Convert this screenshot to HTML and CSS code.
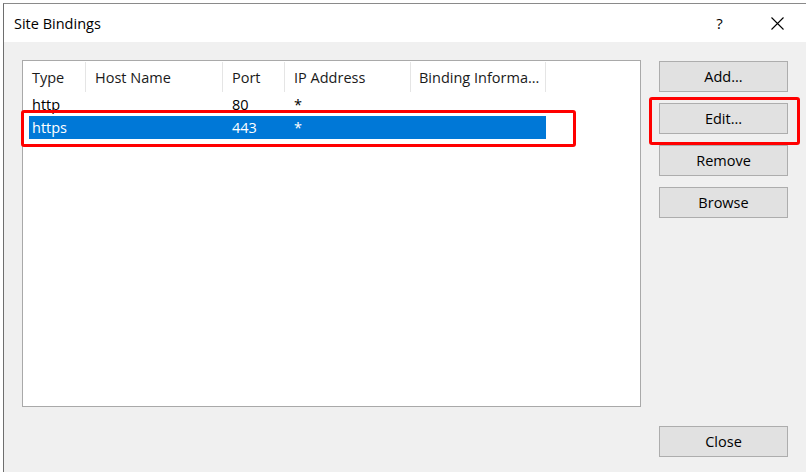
FILE: index.html
```html
<!DOCTYPE html>
<html>
<head>
<meta charset="utf-8">
<link rel="stylesheet" href="styles.css">
</head>
<body>
<div class="dialog">
  <div class="titlebar">
    <span class="title">Site Bindings</span>
    <span class="cap-btn help">?</span>
    <span class="cap-btn close-x">
      <svg width="13" height="13" viewBox="0 0 13 13"><path d="M0.5 0.5 L12.5 12.5 M12.5 0.5 L0.5 12.5" stroke="#000" stroke-width="1.1" fill="none"/></svg>
    </span>
  </div>
  <div class="body">
    <div class="list">
      <div class="header">
        <div class="hcol w1">Type</div>
        <div class="hcol w2">Host Name</div>
        <div class="hcol w3">Port</div>
        <div class="hcol w4">IP Address</div>
        <div class="hcol w5">Binding Informa...</div>
      </div>
      <div class="row">
        <div class="cell first">http</div>
        <div class="cell w2"></div>
        <div class="cell w3">80</div>
        <div class="cell w4">*</div>
        <div class="cell w5"></div>
      </div>
      <div class="row selected">
        <div class="cell first">https</div>
        <div class="cell w2"></div>
        <div class="cell w3">443</div>
        <div class="cell w4">*</div>
        <div class="cell w5"></div>
      </div>
    </div>
    <div class="buttons">
      <button class="btn">Add...</button>
      <button class="btn">Edit...</button>
      <button class="btn">Remove</button>
      <button class="btn">Browse</button>
      <button class="btn btn-close">Close</button>
    </div>
    <div class="mark mark-row"></div>
    <div class="mark mark-edit"></div>
  </div>
</div>
</body>
</html>
```

FILE: styles.css
```css
html, body {
  margin: 0;
  padding: 0;
  width: 806px;
  height: 472px;
  overflow: hidden;
  background: #ffffff;
  font-family: "Open Sans", "Noto Sans", "Liberation Sans", sans-serif;
  font-size: 14.5px;
  color: #000;
}

.dialog {
  margin: 3px 0 0 3px;
  width: 803px;
  height: 469px;
  border-left: 1px solid #6e6e6e;
  border-top: 1px solid #8a8a8a;
  box-sizing: border-box;
  display: flex;
  flex-direction: column;
  background: #f0f0f0;
}

.titlebar {
  height: 38px;
  background: #ffffff;
  display: flex;
  align-items: center;
  flex: none;
}

.title {
  flex: 1;
  padding-left: 10px;
  font-size: 14.5px;
}

.cap-btn {
  width: 57px;
  height: 38px;
  display: flex;
  align-items: center;
  justify-content: center;
  font-size: 15px;
}

.close-x {
  width: 58px;
}

.body {
  position: relative;
  flex: 1;
  display: flex;
  gap: 18px;
  padding: 18px 17px 15px 18px;
}

.list {
  width: 619px;
  height: 347px;
  box-sizing: border-box;
  border: 1px solid #a9a9a9;
  background: #ffffff;
  flex: none;
}

.header {
  display: flex;
  height: 31px;
}

.hcol {
  box-sizing: border-box;
  padding-left: 9px;
  border-right: 1px solid #e5e5e5;
  margin-top: 1px;
  display: flex;
  align-items: center;
  white-space: nowrap;
  color: #1a1a1a;
}

.w1 { width: 63px; }
.w2 { width: 137px; }
.w3 { width: 62px; }
.w4 { width: 126px; }
.w5 { width: 135px; padding-left: 8px; }

.row {
  display: flex;
  height: 23px;
  margin-left: 6px;
  width: 517px;
  align-items: center;
}

.header + .row {
  margin-top: 1px;
}

.cell {
  box-sizing: border-box;
  padding-left: 9px;
  white-space: nowrap;
}

.cell.first {
  width: 57px;
  padding-left: 3px;
}

.row.selected {
  background: #0078d7;
  color: #ffffff;
}

.buttons {
  width: 129px;
  display: flex;
  flex-direction: column;
  gap: 11px;
  padding-top: 1px;
}

.btn {
  width: 129px;
  height: 31px;
  background: #e1e1e1;
  border: 1px solid #adadad;
  font-family: inherit;
  font-size: 14.5px;
  color: #000;
  padding: 0;
  margin: 0;
}

.btn-close {
  margin-top: auto;
}

.mark {
  position: absolute;
  border: 3px solid #ff0000;
  border-radius: 3px;
  box-sizing: border-box;
}

.mark-row {
  left: 17px;
  top: 68px;
  width: 555px;
  height: 37px;
}

.mark-edit {
  left: 645px;
  top: 55px;
  width: 151px;
  height: 48px;
}
```
